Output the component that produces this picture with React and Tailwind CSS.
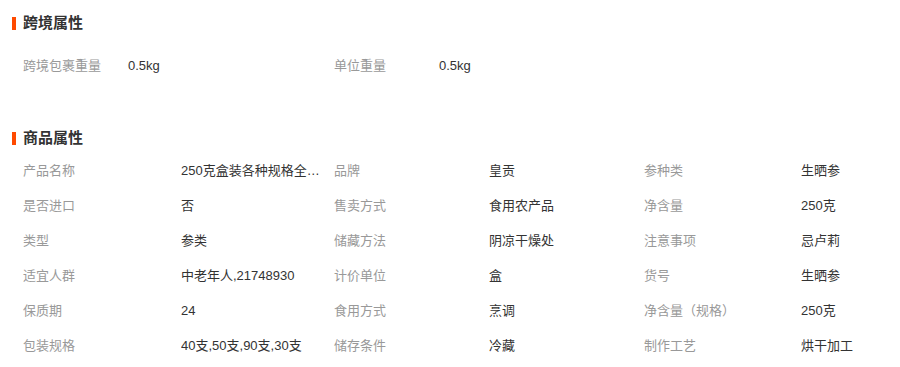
const crossBorder = [
  ['跨境包裹重量', '0.5kg'],
  ['单位重量', '0.5kg'],
]

const attrs = [
  ['产品名称', '250克盒装各种规格全参须'],
  ['品牌', '皇贡'],
  ['参种类', '生晒参'],
  ['是否进口', '否'],
  ['售卖方式', '食用农产品'],
  ['净含量', '250克'],
  ['类型', '参类'],
  ['储藏方法', '阴凉干燥处'],
  ['注意事项', '忌卢莉'],
  ['适宜人群', '中老年人,21748930'],
  ['计价单位', '盒'],
  ['货号', '生晒参'],
  ['保质期', '24'],
  ['食用方式', '烹调'],
  ['净含量（规格）', '250克'],
  ['包装规格', '40支,50支,90支,30支'],
  ['储存条件', '冷藏'],
  ['制作工艺', '烘干加工'],
]

function Title({ children }) {
  return (
    <div className="flex items-center h-[20px]">
      <span className="w-[4px] h-[13px] bg-[#ff4a00] ml-[12px]" />
      <span className="ml-[7px] text-[15px] font-bold text-[#333] leading-[20px]">{children}</span>
    </div>
  )
}

export default function App() {
  return (
    <div
      className="w-[900px] h-[367px] bg-white overflow-hidden text-[13px]"
      style={{ fontFamily: '"Liberation Sans", "Noto Sans CJK SC", sans-serif' }}
    >
      <div className="pt-[13px]">
        <Title>跨境属性</Title>
        <div className="mt-[15px] ml-[23px] grid grid-cols-[105px_206px_105px_1fr] h-[35px] items-center">
          {crossBorder.map(([k, v]) => (
            <>
              <span key={k} className="text-[#999]">{k}</span>
              <span key={k + 'v'} className="text-[#333]">{v}</span>
            </>
          ))}
        </div>
      </div>

      <div className="mt-[45px]">
        <Title>商品属性</Title>
        <div className="mt-[5px] ml-[23px] grid grid-cols-[158px_153px_155px_155px_157px_1fr] auto-rows-[35px] items-center">
          {attrs.map(([k, v]) => (
            <>
              <span key={k} className="text-[#999] whitespace-nowrap">{k}</span>
              <span key={k + 'v'} className="text-[#333] whitespace-nowrap overflow-hidden text-ellipsis pr-[12px]">{v}</span>
            </>
          ))}
        </div>
      </div>
    </div>
  )
}
